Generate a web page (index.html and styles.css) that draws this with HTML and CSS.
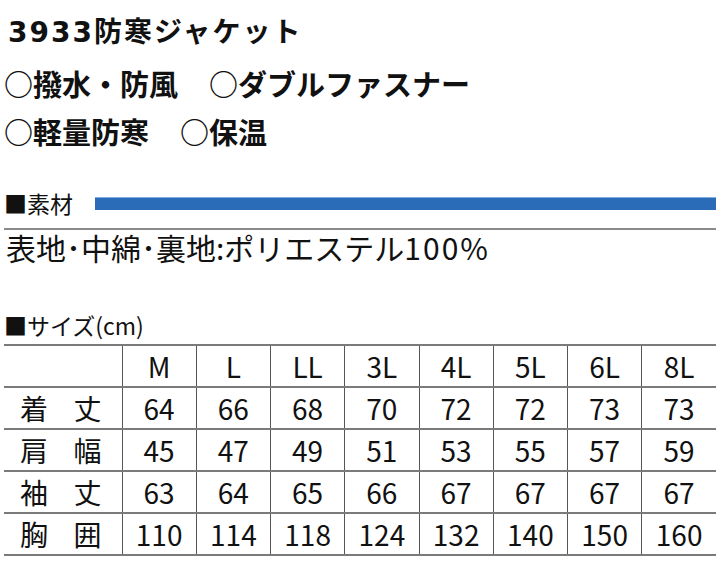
FILE: index.html
```html
<!DOCTYPE html>
<html lang="ja">
<head>
<meta charset="utf-8">
<link rel="stylesheet" href="styles.css">
</head>
<body>
<div class="page">
  <h1 class="title">3933防寒ジャケット</h1>
  <p class="feature">○撥水・防風　<span class="gap"></span>○ダブルファスナー</p>
  <p class="feature">○軽量防寒　<span class="gap"></span>○保温</p>

  <div class="section-head">
    <span class="head-label">■素材</span>
    <span class="blue-bar"></span>
  </div>
  <div class="rule"></div>
  <p class="material">表地･中綿･裏地:ポリエステル<span class="pct">100%</span></p>

  <div class="size-head">■サイズ(cm)</div>
  <table class="sizes">
    <colgroup>
      <col class="c-label">
      <col class="c-val"><col class="c-val"><col class="c-val"><col class="c-val">
      <col class="c-val"><col class="c-val"><col class="c-val"><col class="c-val">
    </colgroup>
    <tr class="hdr">
      <td></td><td>M</td><td>L</td><td>LL</td><td>3L</td><td>4L</td><td>5L</td><td>6L</td><td>8L</td>
    </tr>
    <tr>
      <td><span class="lbl"><span>着</span><span>丈</span></span></td>
      <td>64</td><td>66</td><td>68</td><td>70</td><td>72</td><td>72</td><td>73</td><td>73</td>
    </tr>
    <tr>
      <td><span class="lbl"><span>肩</span><span>幅</span></span></td>
      <td>45</td><td>47</td><td>49</td><td>51</td><td>53</td><td>55</td><td>57</td><td>59</td>
    </tr>
    <tr>
      <td><span class="lbl"><span>袖</span><span>丈</span></span></td>
      <td>63</td><td>64</td><td>65</td><td>66</td><td>67</td><td>67</td><td>67</td><td>67</td>
    </tr>
    <tr>
      <td><span class="lbl"><span>胸</span><span>囲</span></span></td>
      <td>110</td><td>114</td><td>118</td><td>124</td><td>132</td><td>140</td><td>150</td><td>160</td>
    </tr>
  </table>
</div>
</body>
</html>
```

FILE: styles.css
```css
html, body {
  margin: 0;
  padding: 0;
  background: #fff;
}

body {
  font-family: "Noto Sans CJK JP", "Noto Sans", sans-serif;
  color: #111;
}

.page {
  width: 712px;
  padding: 17px 4px 0 4px;
}

.title {
  margin: 0;
  padding-left: 4px;
  font-family: "DejaVu Sans", "Noto Sans CJK JP", sans-serif;
  font-size: 28px;
  font-weight: 700;
  line-height: 32px;
  letter-spacing: 2px;
}

.feature {
  margin: 0;
  font-size: 29px;
  font-weight: 700;
  line-height: 48px;
  white-space: nowrap;
}

.feature:first-of-type {
  margin-top: 10px;
}

.gap {
  display: inline-block;
  width: 2px;
}

.section-head {
  display: flex;
  align-items: center;
  margin-top: 34px;
  height: 28px;
}

.head-label {
  font-size: 23px;
  line-height: 28px;
}

.blue-bar {
  flex: 1;
  height: 13px;
  margin-left: 22px;
  background: #2b6cb8;
  border-top: 1px solid #7fb0e0;
  box-sizing: border-box;
}

.rule {
  height: 2px;
  margin-top: 11px;
  background: #8a8a8a;
}

.material {
  margin: 0 0 0 2px;
  font-size: 30px;
  line-height: 34px;
  white-space: nowrap;
}

.pct {
  letter-spacing: 2px;
}

.size-head {
  margin-top: 47px;
  font-size: 23px;
  line-height: 28px;
}

.sizes {
  margin-top: 5px;
  width: 712px;
  border-collapse: collapse;
  table-layout: fixed;
}

.c-label {
  width: 118px;
}

.c-val {
  width: 74.25px;
}

.sizes td {
  height: 40px;
  padding: 0;
  text-align: center;
  vertical-align: middle;
  font-size: 28px;
  line-height: 40px;
  border-top: 2px solid #7a7a7a;
  border-bottom: 2px solid #7a7a7a;
}

.sizes td + td {
  border-left: 1.5px solid #555;
}

.lbl {
  display: flex;
  justify-content: space-between;
  padding: 0 20px 0 16px;
}
```
